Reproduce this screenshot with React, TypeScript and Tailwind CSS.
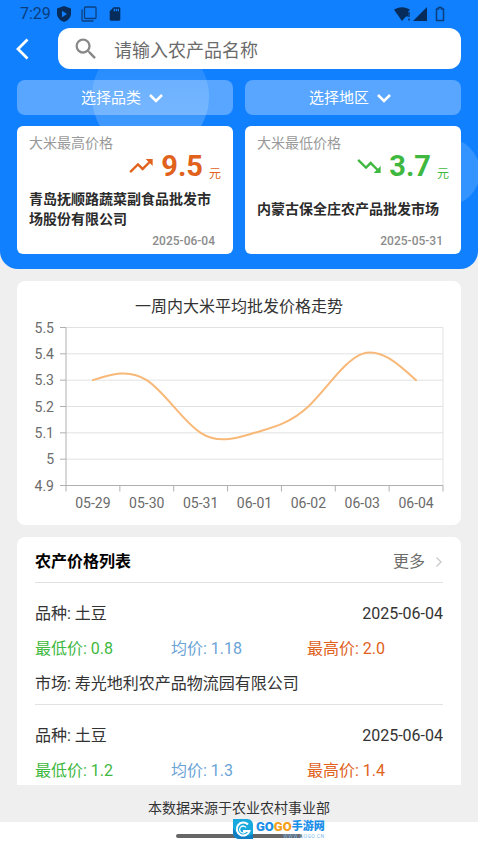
import { useState } from 'react';
import { MdSearch, MdTrendingUp, MdTrendingDown, MdSdCard } from 'react-icons/md';

const trend = [
  { date: '05-29', value: 5.3 },
  { date: '05-30', value: 5.3 },
  { date: '05-31', value: 5.1 },
  { date: '06-01', value: 5.1 },
  { date: '06-02', value: 5.2 },
  { date: '06-03', value: 5.4 },
  { date: '06-04', value: 5.3 },
];

const yTicks = [5.5, 5.4, 5.3, 5.2, 5.1, 5, 4.9];

const priceList = [
  { id: 1, name: '土豆', date: '2025-06-04', low: '0.8', avg: '1.18', high: '2.0', market: '寿光地利农产品物流园有限公司' },
  { id: 2, name: '土豆', date: '2025-06-04', low: '1.2', avg: '1.3', high: '1.4', market: '' },
];

// Plot area inside the chart's viewBox
const LEFT = 49;
const RIGHT = 426;
const TOP = 8.5;
const BOTTOM = 166.5;

const band = (RIGHT - LEFT) / trend.length;
const toX = (i: number) => LEFT + band * (i + 0.5);
const toY = (v: number) => BOTTOM - ((v - 4.9) / 0.6) * (BOTTOM - TOP);

// Natural cubic spline through the points, written as bezier segments
function smoothPath() {
  const y = trend.map((d) => toY(d.value));
  const n = y.length;
  const m: number[] = new Array(n).fill(0);
  const c: number[] = new Array(n).fill(0);
  const r: number[] = new Array(n).fill(0);

  for (let i = 1; i < n - 1; i++) {
    const w = 4 - c[i - 1];
    c[i] = 1 / w;
    r[i] = (6 * (y[i - 1] - 2 * y[i] + y[i + 1]) - r[i - 1]) / w;
  }
  for (let i = n - 2; i > 0; i--) {
    m[i] = r[i] - c[i] * m[i + 1];
  }

  let d = `M${toX(0)} ${y[0]}`;
  for (let i = 0; i < n - 1; i++) {
    const start = y[i + 1] - y[i] - (2 * m[i] + m[i + 1]) / 6;
    const end = y[i + 1] - y[i] + (m[i] + 2 * m[i + 1]) / 6;
    d += ` C${toX(i) + band / 3} ${y[i] + start / 3} ${toX(i + 1) - band / 3} ${y[i + 1] - end / 3} ${toX(i + 1)} ${y[i + 1]}`;
  }
  return d;
}

function TrendChart() {
  return (
    <svg viewBox="0 0 444 206" className="block w-full" role="img" aria-label="一周内大米平均批发价格走势">
      {yTicks.map((v) => (
        <g key={v}>
          <line x1={LEFT} x2={RIGHT} y1={toY(v)} y2={toY(v)} stroke="#e2e2e2" />
          <line x1={LEFT - 6} x2={LEFT} y1={toY(v)} y2={toY(v)} stroke="#b0b0b0" />
          <text x="37" y={toY(v) + 5} textAnchor="end" fontSize="14" fill="#6b6b6b">
            {v}
          </text>
        </g>
      ))}
      <line x1={RIGHT} x2={RIGHT} y1={TOP} y2={BOTTOM} stroke="#e2e2e2" />
      <line x1={LEFT} x2={LEFT} y1={TOP} y2={BOTTOM} stroke="#b0b0b0" />
      <line x1={LEFT} x2={RIGHT} y1={BOTTOM} y2={BOTTOM} stroke="#b0b0b0" />
      {Array.from({ length: trend.length + 1 }, (_, i) => (
        <line key={i} x1={LEFT + band * i} x2={LEFT + band * i} y1={BOTTOM} y2={BOTTOM + 6} stroke="#b0b0b0" />
      ))}
      {trend.map((d, i) => (
        <text key={d.date} x={toX(i)} y="189" textAnchor="middle" fontSize="14" fill="#6b6b6b">
          {d.date}
        </text>
      ))}
      <path d={smoothPath()} fill="none" stroke="#f8b878" strokeWidth="2" strokeLinecap="round" />
    </svg>
  );
}

function StatusBar() {
  return (
    <div className="relative flex h-7 items-center justify-between pl-5 pr-8 text-[#0a3d7c]">
      <div className="flex items-center gap-2.5">
        <span className="text-base">7:29</span>
        <svg viewBox="0 0 14 16" className="-ml-1 h-4 w-3.5">
          <path d="M7 0l7 2.6v5C14 11.500 11 14.800 7 16 3 14.800 0 11.500 0 7.600v-5z" fill="#062c5c" />
          <path d="M5 4.800l5 3.200-5 3.200z" fill="#1080ff" />
        </svg>
        <svg viewBox="0 0 16 16" className="size-4" fill="none" stroke="#0b3f80" strokeWidth="1.3">
          <rect x="3.500" y="1" width="11.500" height="11.500" rx="1" />
          <path d="M1 3.500V14a1 1 0 0 0 1 1h10.500" />
        </svg>
        <MdSdCard className="size-4 text-[#062c5c]" />
      </div>
      <div className="flex items-center">
        <svg viewBox="0 0 52 16" className="h-4 w-13">
          <path d="M0 3.800C4.500.300 11.500.300 16 3.800L14 6v4.500h-2L8 15z" fill="#062c5c" />
          <path d="M15 6v5M15 12.600v2" stroke="#062c5c" strokeWidth="1.400" />
          <path d="M33 1v14H19z" fill="#062c5c" />
          <path d="M44.500 1.500h3V3h2v11.500h-7V3h2z" fill="none" stroke="#0a3d7c" strokeWidth="1.500" />
        </svg>
      </div>
    </div>
  );
}

function FilterButton({ label }: { label: string }) {
  return (
    <button
      type="button"
      className="flex h-[35px] items-center justify-center gap-2 rounded-lg bg-white/30 pr-1.5 pt-0.5 text-[15px] text-white"
    >
      {label}
      <svg viewBox="0 0 14 9" className="h-[9px] w-3.5" fill="none" stroke="currentColor" strokeWidth="2.6">
        <path d="M1 1l6 6 6-6" />
      </svg>
    </button>
  );
}

type PriceCardProps = {
  title: string;
  price: string;
  market: string;
  date: string;
  up?: boolean;
};

function PriceCard({ title, price, market, date, up }: PriceCardProps) {
  const Icon = up ? MdTrendingUp : MdTrendingDown;
  return (
    <div className="flex h-32 flex-col rounded-md bg-white px-3 pb-1 pt-2">
      <p className="text-sm leading-[18px] text-[#999999]">{title}</p>
      <div className={`flex items-center justify-end ${up ? 'text-[#e0621c]' : 'text-[#3fb83f]'}`}>
        <Icon className="size-7" />
        <span className="ml-1.5 text-[29px] font-bold leading-6">{price}</span>
        <span className="ml-1.5 self-end text-xs leading-3">元</span>
      </div>
      <div className="flex flex-1 items-center pt-1.5">
        <p className="text-sm font-bold leading-5 text-[#2b2b2b]">{market}</p>
      </div>
      <p className="pr-1.5 text-right text-xs font-medium leading-[18px] text-[#8c8c8c]">{date}</p>
    </div>
  );
}

function GogoMark() {
  return (
    <div className="absolute left-[232px] top-[-3px] flex items-center">
      <svg viewBox="0 0 22 20" className="h-5 w-[22px]">
        <path d="M1 0h14c4 0 6 3 6 6v14H8c-5 0-7-3-7-7z" fill="#17a8de" />
        <path d="M1 9v4c0 4 2 7 7 7h13v-5C14 19 5 17 1 9z" fill="#0f7fc4" />
        <path d="M16 5.500A6.500 6.500 0 1 0 17.500 12H11" fill="none" stroke="#fff" strokeWidth="2" />
        <path d="M14 8.500a3.500 3.500 0 1 0 0 4" fill="none" stroke="#fff" strokeWidth="1.300" />
      </svg>
      <div className="ml-0.5">
        <p className="flex items-center text-[11px] font-black leading-[14px] text-[#1b8fe8]">
          <span className="text-[13px]">
            GO<span className="text-[#f5a01a]">GO</span>
          </span>
          手游网
        </p>
        <p className="text-right text-[5px] leading-[5px] tracking-widest text-[#7db8e8]">WWW.GOGO.CN</p>
      </div>
    </div>
  );
}

export default function App() {
  const [keyword, setKeyword] = useState('');

  return (
    <div className="flex h-screen flex-col bg-[#efefef] font-['Roboto','Noto_Sans_CJK_SC',sans-serif] text-[#333333]">
      <header className="relative shrink-0 overflow-hidden rounded-b-[18px] bg-[#1080ff] pb-[15px]">
        {/* Decorative bubbles */}
        <div className="absolute left-[92px] top-[38px] size-[117px] rounded-full bg-linear-to-b from-white/5 to-white/25" />
        <div className="absolute -right-0.5 top-[138px] size-[68px] rounded-full bg-white/15" />

        <StatusBar />

        <div className="relative flex items-center pr-[17px]">
          <button type="button" aria-label="返回" className="flex w-[58px] shrink-0 items-center pl-[15px] text-white">
            <svg viewBox="0 0 14 22" className="h-[22px] w-3.5" fill="none" stroke="currentColor" strokeWidth="2.800">
              <path d="M12.500 1.500L3 11l9.500 9.500" />
            </svg>
          </button>
          <label className="flex h-[41px] min-w-0 flex-1 items-center rounded-xl bg-white pl-3.5">
            <MdSearch className="size-7 shrink-0 text-[#888888]" />
            <input
              type="search"
              aria-label="搜索"
              value={keyword}
              onChange={(e) => setKeyword(e.target.value)}
              placeholder="请输入农产品名称"
              className="ml-3.5 min-w-0 flex-1 bg-transparent pt-[5px] text-lg outline-none placeholder:text-[#6b6b6b]"
            />
          </label>
        </div>

        <div className="relative grid grid-cols-2 gap-x-3 gap-y-[11px] px-[17px] pt-[11px]">
          <FilterButton label="选择品类" />
          <FilterButton label="选择地区" />
          <PriceCard up title="大米最高价格" price="9.5" market="青岛抚顺路蔬菜副食品批发市场股份有限公司" date="2025-06-04" />
          <PriceCard title="大米最低价格" price="3.7" market="内蒙古保全庄农产品批发市场" date="2025-05-31" />
        </div>
      </header>

      <main className="min-h-0 flex-1 overflow-y-auto px-[17px] pt-3 [scrollbar-width:none]">
        <section className="rounded-lg bg-white pt-3.5">
          <h2 className="text-center text-base leading-6">一周内大米平均批发价格走势</h2>
          <TrendChart />
        </section>

        <section className="mt-3 rounded-t-lg bg-white px-[18px]">
          <div className="flex h-[46px] items-center justify-between border-b border-[#e2e2e2] pt-1">
            <h2 className="text-base font-bold text-black">农产价格列表</h2>
            <a href="#more" className="flex items-center gap-2.5 text-base text-[#6b6b6b]">
              更多
              <svg viewBox="0 0 8 12" className="h-3 w-2" fill="none" stroke="#c8c8c8" strokeWidth="1.300">
                <path d="M1.500 1.500L6 6l-4.500 4.500" />
              </svg>
            </a>
          </div>
          {priceList.map((item) => (
            <div key={item.id} className="flex flex-col gap-[11px] border-b border-[#e2e2e2] pb-2 pt-[19px] text-base">
              <div className="flex justify-between">
                <span>品种: {item.name}</span>
                <span>{item.date}</span>
              </div>
              <div className="grid grid-cols-3">
                <span className="text-[#3fb83f]">最低价: {item.low}</span>
                <span className="text-[#6aa3d5]">均价: {item.avg}</span>
                <span className="text-[#e0621c]">最高价: {item.high}</span>
              </div>
              {item.market && <p>市场: {item.market}</p>}
            </div>
          ))}
        </section>
      </main>

      <footer className="shrink-0">
        <p className="pb-[3px] pt-[13px] text-center text-sm leading-[21px]">本数据来源于农业农村事业部</p>
        <div className="relative h-7 bg-white pt-3">
          <div className="mx-auto h-1 w-[126px] rounded-full bg-[#666666]" />
          <GogoMark />
        </div>
      </footer>
    </div>
  );
}
